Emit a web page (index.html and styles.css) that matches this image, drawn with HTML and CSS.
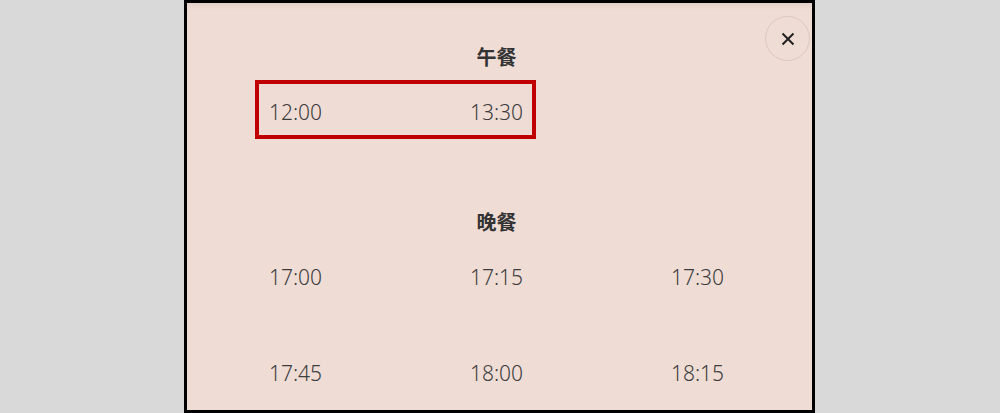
FILE: index.html
```html
<!DOCTYPE html>
<html lang="zh">
<head>
<meta charset="utf-8">
<title>Time slots</title>
<link rel="stylesheet" href="styles.css">
</head>
<body>
<div class="panel">
  <button class="close" aria-label="close">
    <svg width="14" height="14" viewBox="0 0 14 14"><path d="M1.5 1.5 L12.5 12.5 M12.5 1.5 L1.5 12.5" stroke="#222" stroke-width="2" fill="none"/></svg>
  </button>
  <section class="meal lunch">
    <h2 class="title">午餐</h2>
    <div class="slots">
      <div class="slot">12:00</div>
      <div class="slot">13:30</div>
    </div>
    <div class="highlight"></div>
  </section>
  <section class="meal dinner">
    <h2 class="title">晚餐</h2>
    <div class="slots">
      <div class="slot">17:00</div>
      <div class="slot">17:15</div>
      <div class="slot">17:30</div>
      <div class="slot">17:45</div>
      <div class="slot">18:00</div>
      <div class="slot">18:15</div>
    </div>
  </section>
</div>
</body>
</html>
```
FILE: styles.css
```css
html, body {
  margin: 0;
  padding: 0;
  background: #d9d9d9;
  height: 413px;
  overflow: hidden;
}
.panel {
  position: relative;
  box-sizing: border-box;
  width: 631px;
  height: 413px;
  margin-left: 184px;
  border: 3px solid #000;
  background: #efdcd5;
  box-shadow: inset 0 7px 6px -5px rgba(0,0,0,0.07);
  padding: 36px 14px 0 8px;
  overflow: hidden;
  font-family: "Noto Sans", "Open Sans", "Noto Sans CJK SC", sans-serif;
}
.close {
  position: absolute;
  top: 13px;
  right: 2px;
  width: 45px;
  height: 45px;
  border-radius: 50%;
  border: 1px solid #dcc8c0;
  background: transparent;
  padding: 0;
  display: flex;
  align-items: center;
  justify-content: center;
}
.meal {
  position: relative;
}
.dinner {
  margin-top: 56px;
}
.title {
  margin: 0;
  height: 36px;
  line-height: 36px;
  text-align: center;
  font-family: "Noto Sans CJK SC", "Noto Sans", sans-serif;
  font-size: 20px;
  font-weight: 700;
  color: #333;
  width: 603px;
}
.slots {
  display: grid;
  grid-template-columns: repeat(3, 201px);
  row-gap: 24px;
  margin-top: 1px;
}
.slot {
  height: 72px;
  line-height: 72px;
  text-align: center;
  font-size: 21px;
  font-weight: 300;
  color: #3d3d3d;
}
.highlight {
  position: absolute;
  left: 60px;
  top: 41px;
  width: 281px;
  height: 59px;
  box-sizing: border-box;
  border: 4px solid #c00000;
}
```
